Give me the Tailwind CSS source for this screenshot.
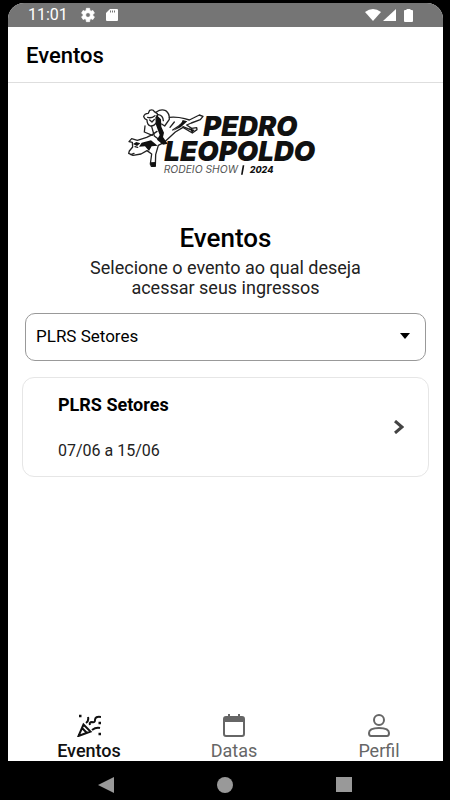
<!DOCTYPE html>
<html lang="pt-BR">

<head>
    <meta charset="UTF-8">
    <meta name="viewport" content="width=device-width, initial-scale=1.0">
    <title>Eventos</title>
    <script src="https://cdn.jsdelivr.net/npm/@tailwindcss/browser@4"></script>
</head>

<body class="bg-black min-h-screen flex flex-col pt-[3px] pl-2 pr-[7px] font-[Roboto,sans-serif] text-black">
    <div class="flex-grow flex flex-col bg-white rounded-t-2xl overflow-hidden">
        <!-- status bar -->
        <div class="h-6 bg-[#757575] text-white flex items-center justify-between pl-5 pr-[30px]">
            <div class="flex items-center">
                <span class="text-base leading-6">11:01</span>
                <svg class="w-4 h-4 ml-3" viewBox="0 0 24 24" fill="currentColor">
                    <path d="M19.4 13a7.6 7.6 0 0 0 0-2l2.3-1.8-2.3-4-2.8 1a7.6 7.6 0 0 0-1.7-1L14.5 2h-5l-.4 3.2a7.6 7.6 0 0 0-1.7 1l-2.8-1-2.3 4L4.6 11a7.6 7.6 0 0 0 0 2l-2.3 1.8 2.3 4 2.8-1a7.6 7.6 0 0 0 1.7 1l.4 3.2h5l.4-3.2a7.6 7.6 0 0 0 1.7-1l2.8 1 2.3-4zM12 15.500a3.500 3.500 0 1 1 0-7 3.500 3.500 0 0 1 0 7z" stroke="currentColor" />
                </svg>
                <svg class="w-3 h-3 ml-[10px]" viewBox="0 0 12 12">
                    <path d="M4 0h7q1 0 1 1v10q0 1-1 1H1q-1 0-1-1V4z" fill="currentColor" />
                    <path d="M4.500 1.500v2M6.500 1.500v2M8.500 1.500v2" stroke="#757575" />
                </svg>
            </div>
            <div class="flex items-center">
                <svg class="w-4 h-3" viewBox="0 0 16 12" fill="currentColor">
                    <path d="M0 3Q8-3 16 3L8 12z" />
                </svg>
                <svg class="w-[13px] h-3 ml-[2px]" viewBox="0 0 13 12" fill="currentColor">
                    <path d="M13 0v12H0z" />
                </svg>
                <svg class="w-[9px] h-[13px] ml-2" viewBox="0 0 9 13" fill="currentColor">
                    <path d="M2.500 0h4v1H8q1 0 1 1v10q0 1-1 1H1q-1 0-1-1V2q0-1 1-1h1.500z" />
                </svg>
            </div>
        </div>

        <header class="h-14 flex items-center px-[18px] pt-[2px] border-b border-[#dedede]">
            <h1 class="text-[22px] leading-6 font-medium">Eventos</h1>
        </header>

        <main class="flex-grow flex flex-col px-[14px] pt-[17px]">
            <svg class="w-[210px] h-20 self-center" viewBox="0 0 630 240" role="img" aria-label="Pedro Leopoldo Rodeio Show 2024">
                <g fill="none" stroke="#222" stroke-width="4" stroke-linejoin="round" stroke-linecap="round">
                    <!-- rider -->
                    <path d="M68 50q2-10 14-10l4-9q10-4 14 4l9 6q3 7-4 12l1 14q-6 12-18 11-10-4-10-18-8-2-10-10z" />
                    <path d="M80 52q10 4 22-5M86 60l7 6 7-8" />
                    <path d="M106 36q14-10 28-4 12 8 11 26l-14 20-9-6M112 44q14 2 15 18" />
                    <path d="M72 78l-2 18 24 10M92 80l8 28 16 12" />
                    <!-- bull body and hind legs -->
                    <path d="M145 52q24-2 46 4l14 4 30-15 11 4-8 10-27 10-14 6 15 10 15-2 1 6-14 10-28-17-23 14-35 32-16 8-8 28-1 34-12 1-3-7 4-30-14-10-18 10-24 4-13-6 2-7 10-12-1-14-10-2 8-9 17 5 28-9 17-8 14-10" />
                    <path d="M160 66l-13 16M187 66l-14 12-18 12M186 80l20 8M42 140l8 2M30 164l9-4" />
                </g>
                <g fill="#111">
                    <path d="M106 44l14 14 1 22 8 18-3 13 14 20-14 3-18-15 8-14-11-30z" />
                    <path d="M62 128l28-7 20 16-18 2-8 14-12-14-18 1zM88 187l17-1-1 14-12 1z" />
                    <path d="M185 60l14 4-20 18-22 10 22-18zM204 84l17 6-8 8z" />
                    <path d="M36 132l10-6 12 4-10 8z" />
                </g>
                <g font-family="Inter, sans-serif" font-style="italic" fill="#111">
                    <text x="247" y="109" font-size="82" font-weight="900">PEDRO</text>
                    <text x="130" y="182" font-size="83" font-weight="900">LEOPOLDO</text>
                    <text x="128" y="219" font-size="31" fill="#555">RODEIO SHOW</text>
                    <path d="M365 196h5l-5 28h-5z" />
                    <text x="386" y="219" font-size="27" font-weight="800">2024</text>
                </g>
            </svg>

            <h2 class="text-[26px] leading-8 font-medium text-center mt-[42px]">Eventos</h2>
            <p class="text-lg leading-5 text-center text-[#222] mt-1">Selecione o evento ao qual deseja<br>acessar seus ingressos</p>

            <div class="relative mt-[15px] mx-[3px]">
                <select aria-label="Evento" class="appearance-none block w-full h-12 rounded-[10px] border border-[#999] bg-white pl-[10px] pr-10 text-[17px]">
                    <option>PLRS Setores</option>
                </select>
                <svg class="absolute right-4 top-5 w-[10px] h-[6px] pointer-events-none" viewBox="0 0 10 6">
                    <path d="M0 0h10L5 6z" />
                </svg>
            </div>

            <button class="mt-4 h-[100px] flex items-center justify-between text-left rounded-xl border border-[#e6e6e6] pl-[35px] pr-6">
                <span class="flex flex-col gap-6">
                    <span class="text-lg leading-6 font-bold">PLRS Setores</span>
                    <span class="text-base leading-5 text-[#222]">07/06 a 15/06</span>
                </span>
                <svg class="w-[10px] h-[14px]" viewBox="0 0 10 14" fill="none" stroke="#444" stroke-width="3">
                    <path d="M1 1l7 6-7 6" />
                </svg>
            </button>
        </main>

        <nav class="flex justify-between pl-[41px] pr-6 text-lg leading-5 text-[#666]">
            <a href="#" class="w-20 flex flex-col items-center gap-1 font-medium text-[#111]">
                <svg class="w-6 h-6" viewBox="0 0 24 24" fill="none" stroke="currentColor" stroke-width="2">
                    <path d="M6.500 11.500L1.500 23l12-4.500zM5 15l5 5M11 4q1 4-2 6M13 12q-1-3 2-3 3 1 3-2 0-4 6-3M15 17q4-3 8-2" />
                    <path d="M2 3h2.500M21.500 10H24M21.500 21H24" stroke-width="2.500" />
                </svg>
                Eventos
            </a>
            <a href="#" class="w-20 flex flex-col items-center gap-1">
                <svg class="w-6 h-6" viewBox="0 0 24 24" fill="none" stroke="currentColor" stroke-width="2">
                    <rect x="2" y="4" width="20" height="19" rx="2" />
                    <path d="M2 7h20" stroke-width="4" />
                    <path d="M7 1v4M17 1v4" />
                </svg>
                Datas
            </a>
            <a href="#" class="w-20 flex flex-col items-center gap-1">
                <svg class="w-6 h-6" viewBox="0 0 24 24" fill="none" stroke="currentColor" stroke-width="2">
                    <circle cx="12" cy="7" r="5" />
                    <path d="M2 20q0-5 10-5t10 5q0 3-2 3H4q-2 0-2-3z" />
                </svg>
                Perfil
            </a>
        </nav>
    </div>

    <!-- system buttons -->
    <div class="h-[39px] flex items-center justify-between pt-2 pl-[90px] pr-[91px] text-[#999]">
        <button aria-label="Voltar">
            <svg class="w-4 h-4" viewBox="0 0 16 16" fill="currentColor">
                <path d="M16 0v16L0 8z" />
            </svg>
        </button>
        <button aria-label="Início" class="w-4 h-4 rounded-full bg-[#999]"></button>
        <button aria-label="Recentes" class="w-4 h-[15px] bg-[#999]"></button>
    </div>
</body>

</html>
